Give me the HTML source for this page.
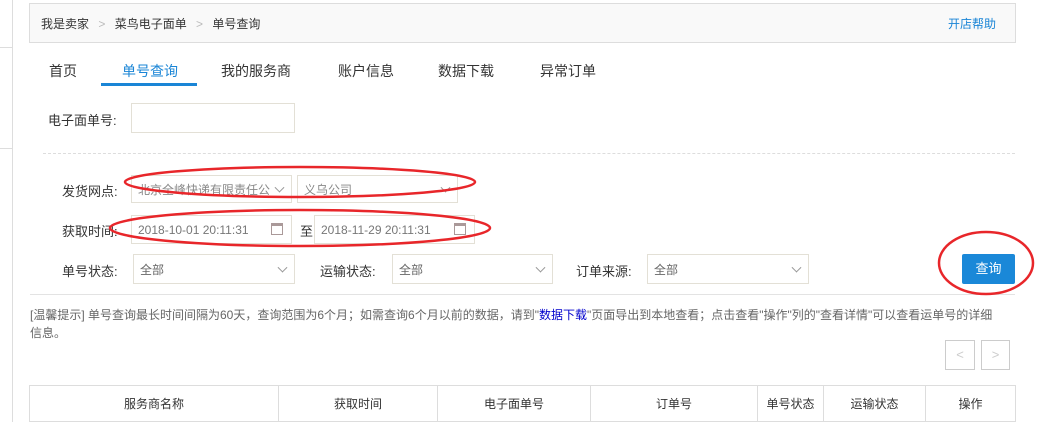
<!DOCTYPE html>
<html><head><meta charset="utf-8"><style>
*{margin:0;padding:0;box-sizing:border-box}
html,body{width:1064px;height:422px;overflow:hidden}
body{background:#fff;font-family:"Liberation Sans","Noto Sans CJK SC",sans-serif;color:#333;position:relative;font-size:12px}
.a{position:absolute;white-space:nowrap}
.box{position:absolute;border:1px solid #e3e0d6;background:#fff;color:#666;font-size:12px;padding-left:6px;display:flex;align-items:center}
.chev{position:absolute;right:8px;top:50%;width:7px;height:7px;border-right:1px solid #999;border-bottom:1px solid #999;transform:translateY(-70%) rotate(45deg)}
.cal{position:absolute;right:8px;top:7px;width:12px;height:12px;border:1px solid #a99;border-top-width:3px}
.lbl{font-size:13px;color:#333}
th,td{border:1px solid #ddd;font-weight:normal;font-size:12px;color:#333;text-align:center}
</style></head><body>
<div class="a" style="left:12px;top:0;width:1px;height:422px;background:#ddd"></div>
<div class="a" style="left:0;top:47px;width:12px;height:1px;background:#ddd"></div>
<div class="a" style="left:0;top:148px;width:12px;height:1px;background:#ddd"></div>

<div class="a" style="left:29px;top:3px;width:987px;height:40px;background:#f9f9f9;border:1px solid #ddd"></div>
<div class="a" style="left:41px;top:15px;font-size:12px;color:#333">我是卖家 <span style="color:#bbb;margin:0 6px">&gt;</span> 菜鸟电子面单 <span style="color:#bbb;margin:0 6px">&gt;</span> 单号查询</div>
<div class="a" style="left:948px;top:15px;font-size:12px;color:#1a85d6">开店帮助</div>

<div class="a" style="left:49px;top:61px;font-size:14px">首页</div>
<div class="a" style="left:122px;top:61px;font-size:14px;color:#1a85d6">单号查询</div>
<div class="a" style="left:101px;top:83px;width:96px;height:3px;background:#1a85d6"></div>
<div class="a" style="left:221px;top:61px;font-size:14px">我的服务商</div>
<div class="a" style="left:338px;top:61px;font-size:14px">账户信息</div>
<div class="a" style="left:438px;top:61px;font-size:14px">数据下载</div>
<div class="a" style="left:540px;top:61px;font-size:14px">异常订单</div>

<div class="a lbl" style="left:48px;top:110px">电子面单号:</div>
<div class="box" style="left:131px;top:103px;width:164px;height:30px"></div>
<div class="a" style="left:43px;top:153px;width:972px;border-top:1px dashed #ddd"></div>

<div class="a lbl" style="left:62px;top:181px">发货网点:</div>
<div class="box" style="left:131px;top:175px;width:161px;height:28px;color:#888">北京全峰快递有限责任公<span class="chev"></span></div>
<div class="box" style="left:297px;top:175px;width:161px;height:28px;color:#888">义乌公司<span class="chev"></span></div>

<div class="a lbl" style="left:62px;top:221px">获取时间:</div>
<div class="box" style="left:131px;top:215px;width:161px;height:29px;color:#777">2018-10-01 20:11:31<span class="cal"></span></div>
<div class="a lbl" style="left:300px;top:221px">至</div>
<div class="box" style="left:314px;top:215px;width:161px;height:29px;color:#777">2018-11-29 20:11:31<span class="cal"></span></div>

<div class="a lbl" style="left:62px;top:261px">单号状态:</div>
<div class="box" style="left:133px;top:254px;width:162px;height:30px">全部<span class="chev"></span></div>
<div class="a lbl" style="left:320px;top:261px">运输状态:</div>
<div class="box" style="left:392px;top:254px;width:161px;height:30px">全部<span class="chev"></span></div>
<div class="a lbl" style="left:576px;top:261px">订单来源:</div>
<div class="box" style="left:647px;top:254px;width:162px;height:30px">全部<span class="chev"></span></div>
<div class="a" style="left:962px;top:254px;width:53px;height:30px;background:#1a88d8;border-radius:2px;color:#fff;font-size:13px;line-height:30px;text-align:center">查询</div>
<div class="a" style="left:30px;top:294px;width:985px;height:1px;background:#e3e3e3"></div>

<div class="a" style="left:30px;top:306px;font-size:12px;line-height:18px;color:#666">[温馨提示] 单号查询最长时间间隔为60天，查询范围为6个月；如需查询6个月以前的数据，请到"<span style="color:#00c">数据下载</span>"页面导出到本地查看；点击查看"操作"列的"查看详情"可以查看运单号的详细<br>信息。</div>

<div class="a" style="left:945px;top:340px;width:30px;height:30px;border:1px solid #ccc;color:#ccc;text-align:center;line-height:28px;font-size:13px">&lt;</div>
<div class="a" style="left:981px;top:340px;width:29px;height:30px;border:1px solid #ccc;color:#ccc;text-align:center;line-height:28px;font-size:13px">&gt;</div>

<table class="a" style="left:29px;top:385px;width:987px;border-collapse:collapse">
<tr style="height:36px"><th style="width:249px">服务商名称</th><th style="width:159px">获取时间</th><th style="width:153px">电子面单号</th><th style="width:167px">订单号</th><th style="width:66px">单号状态</th><th style="width:102px">运输状态</th><th>操作</th></tr>
</table>

<svg class="a" style="left:0;top:0" width="1064" height="422">
<g fill="none" stroke="#e8262a" stroke-width="2.5">
<ellipse cx="300" cy="182" rx="175" ry="15"/>
<ellipse cx="300" cy="228" rx="190" ry="18"/>
<ellipse cx="986" cy="263" rx="47" ry="31"/>
</g></svg>
</body></html>
